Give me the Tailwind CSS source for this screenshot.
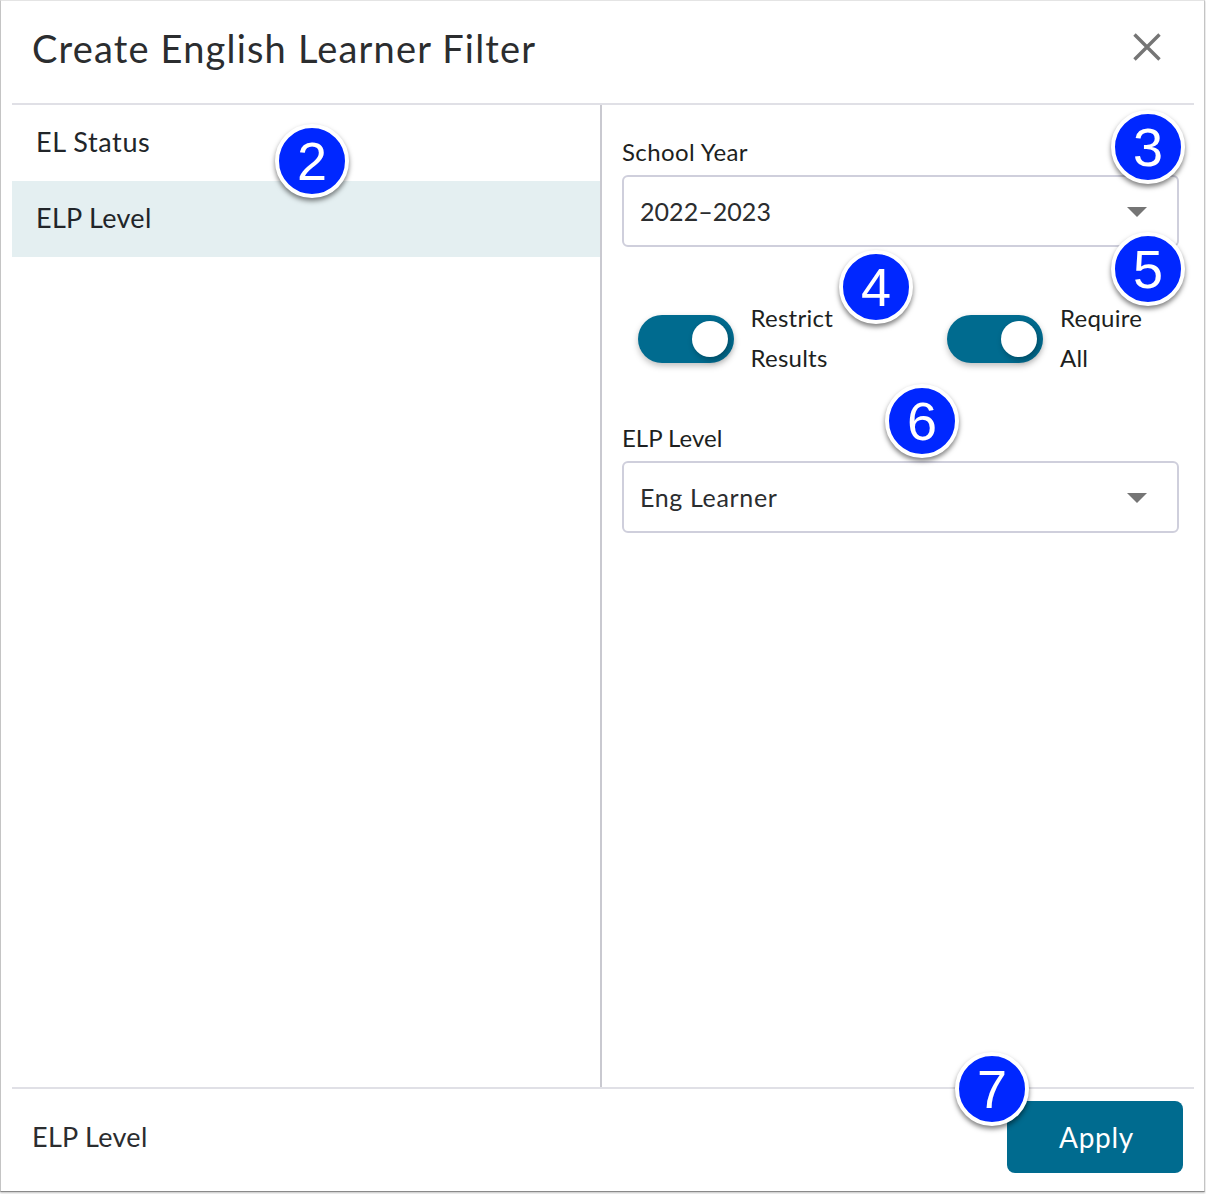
<!DOCTYPE html>
<html><head><meta charset="utf-8"><script src="https://cdn.jsdelivr.net/npm/@tailwindcss/browser@4"></script></head>
<body class="bg-white">
<div class="relative w-[1206px] h-[1194px] overflow-hidden bg-white font-['Lato',sans-serif] text-[#212529]">
  <div class="absolute left-0 top-0 w-[1205px] h-[1192px] border border-t-[#e4e4e4] border-l-[#c4c4c4] border-r-[#c4c4c4] border-b-[#8a8a8a] shadow-[0_1px_2px_rgba(0,0,0,0.25)] pointer-events-none"></div>
  <div class="flex flex-col h-[1191px] pl-3 pr-3 w-[1206px]">
    <header class="flex items-center justify-between h-[103px] shrink-0 pl-5 pr-[33px] pb-[8px]">
      <h1 class="text-[38px] leading-none tracking-[1.18px] text-[#2b2d2f]">Create English Learner Filter</h1>
      <svg class="w-[28px] h-[28px] mb-[2px]" viewBox="0 0 28 28" fill="none" stroke="#757575" stroke-width="3.4"><path d="M1.5 1.5 L26.5 26.5 M26.5 1.5 L1.5 26.5"/></svg>
    </header>
    <div class="h-[2px] w-[1182px] bg-[#e0e0e6] shrink-0"></div>
    <main class="flex h-[982px] w-[1182px] shrink-0">
      <nav class="w-[588px] shrink-0 text-[27px]">
        <div class="h-[76px] pl-6 flex items-center pb-[1px] tracking-[0.6px]">EL Status</div>
        <div class="h-[76px] pl-6 flex items-center bg-[#e4eff1] tracking-[0.3px] pb-[1px]">ELP Level</div>
      </nav>
      <div class="w-[2px] bg-[#c9c9d0] shrink-0"></div>
      <section class="flex-1 pl-5 pr-[15px] text-[#1d1f21]">
        <label class="block pt-[32px] text-[24px] leading-[30px] tracking-[0.4px]">School Year</label>
        <div class="mt-[8px] h-[72px] rounded-md border-2 border-[#cfcfdc] flex items-center justify-between pl-4 pr-[30px] text-[25px] tracking-[0.05px] text-[#2b2d2f]">
          <span class="pt-[2px]">2022–2023</span>
          <span class="w-0 h-0 mt-[2px] border-l-[10px] border-r-[10px] border-t-[10px] border-l-transparent border-r-transparent border-t-[#757575]"></span>
        </div>
        <div class="flex mt-[51px] h-[80px] text-[24px] leading-[40px] tracking-[0.25px]">
          <div class="flex items-start pl-[16px] w-[325px]">
            <div class="relative w-[96px] h-[48px] mt-[17px] rounded-full bg-[#006b8f] shadow-[0_3px_6px_rgba(0,0,0,0.25)]"><span class="absolute right-[6px] top-[6px] w-9 h-9 rounded-full bg-white shadow-[2px_3px_6px_rgba(0,0,0,0.3)]"></span></div>
            <div class="ml-[16.5px]">Restrict<br>Results</div>
          </div>
          <div class="flex items-start">
            <div class="relative w-[96px] h-[48px] mt-[17px] rounded-full bg-[#006b8f] shadow-[0_3px_6px_rgba(0,0,0,0.25)]"><span class="absolute right-[6px] top-[6px] w-9 h-9 rounded-full bg-white shadow-[2px_3px_6px_rgba(0,0,0,0.3)]"></span></div>
            <div class="ml-[17px]">Require<br>All</div>
          </div>
        </div>
        <label class="block mt-[45px] text-[24px] leading-[30px] tracking-[0px]">ELP Level</label>
        <div class="mt-[8px] h-[72px] rounded-md border-2 border-[#cfcfdc] flex items-center justify-between pl-4 pr-[30px] text-[25px] tracking-[0.65px] text-[#2b2d2f]">
          <span class="pt-[2px]">Eng Learner</span>
          <span class="w-0 h-0 mt-[2px] border-l-[10px] border-r-[10px] border-t-[10px] border-l-transparent border-r-transparent border-t-[#757575]"></span>
        </div>
      </section>
    </main>
    <div class="h-[2px] w-[1182px] bg-[#e0e0e6] shrink-0"></div>
    <footer class="flex items-center justify-between h-[102px] pl-5 pr-[11px]">
      <span class="text-[27px] tracking-[0.3px] text-[#2b2d2f] mb-[6px]">ELP Level</span>
      <button class="w-[176px] h-[72px] pl-[3px] rounded-lg bg-[#006b8f] text-white text-[28px] tracking-[0.7px] mt-[-6px]">Apply</button>
    </footer>
  </div>
  <div class="absolute left-[275px] top-[124px] w-[74px] h-[74px] rounded-full bg-[#0027ff] border-[4px] border-white shadow-[0_3px_5px_rgba(0,0,0,0.5)] flex items-center justify-center font-['Liberation_Sans',sans-serif] text-white text-[54px] leading-none">2</div>
  <div class="absolute left-[1111px] top-[110px] w-[74px] h-[74px] rounded-full bg-[#0027ff] border-[4px] border-white shadow-[0_3px_5px_rgba(0,0,0,0.5)] flex items-center justify-center font-['Liberation_Sans',sans-serif] text-white text-[54px] leading-none">3</div>
  <div class="absolute left-[839px] top-[250px] w-[74px] h-[74px] rounded-full bg-[#0027ff] border-[4px] border-white shadow-[0_3px_5px_rgba(0,0,0,0.5)] flex items-center justify-center font-['Liberation_Sans',sans-serif] text-white text-[54px] leading-none">4</div>
  <div class="absolute left-[1111px] top-[232px] w-[74px] h-[74px] rounded-full bg-[#0027ff] border-[4px] border-white shadow-[0_3px_5px_rgba(0,0,0,0.5)] flex items-center justify-center font-['Liberation_Sans',sans-serif] text-white text-[54px] leading-none">5</div>
  <div class="absolute left-[885px] top-[384px] w-[74px] h-[74px] rounded-full bg-[#0027ff] border-[4px] border-white shadow-[0_3px_5px_rgba(0,0,0,0.5)] flex items-center justify-center font-['Liberation_Sans',sans-serif] text-white text-[54px] leading-none">6</div>
  <div class="absolute left-[955px] top-[1052px] w-[74px] h-[74px] rounded-full bg-[#0027ff] border-[4px] border-white shadow-[0_3px_5px_rgba(0,0,0,0.5)] flex items-center justify-center font-['Liberation_Sans',sans-serif] text-white text-[54px] leading-none">7</div>
</div>
</body></html>
